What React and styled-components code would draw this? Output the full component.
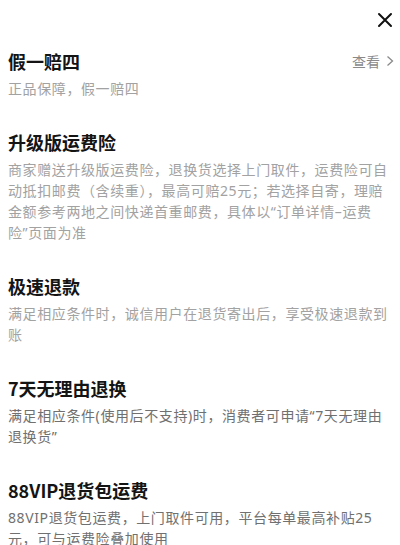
import React from 'react';
import styled, { createGlobalStyle } from 'styled-components';

const GlobalStyle = createGlobalStyle`
    html, body {
        margin: 0;
        padding: 0;
        background: #ffffff;
    }
    body {
        font-family: "Noto Sans CJK SC", "Noto Sans", sans-serif;
    }
`;

const Sheet = styled.div`
    width: 400px;
    height: 545px;
    overflow: hidden;
    background: #ffffff;
`;

const Header = styled.div`
    display: flex;
    justify-content: flex-end;
    align-items: center;
    height: 40px;
    padding: 0 6px;
`;

const CloseButton = styled.button`
    display: flex;
    align-items: center;
    justify-content: center;
    width: 18px;
    height: 18px;
    padding: 0;
    border: none;
    background: none;
    color: #111111;
`;

const List = styled.div`
    display: flex;
    flex-direction: column;
    gap: 31px;
    padding: 9px 8px 0 8px;
`;

const Section = styled.section`
    display: flex;
    flex-direction: column;
    gap: 5px;
`;

const TitleRow = styled.div`
    display: flex;
    justify-content: space-between;
    align-items: center;
`;

const Title = styled.h3`
    margin: 0;
    font-size: 18px;
    line-height: 24px;
    font-weight: 700;
    color: #141414;
`;

const ViewLink = styled.a`
    display: flex;
    align-items: center;
    gap: 6px;
    font-size: 14px;
    line-height: 24px;
    color: #8a8a8a;
    margin-right: -2px;
`;

const Desc = styled.p`
    margin: 0;
    font-family: "Noto Sans", "Noto Sans CJK SC", sans-serif;
    font-size: 14px;
    letter-spacing: 0.6px;
    line-height: 21px;
    color: ${(p) => (p.$dark ? '#707070' : '#a2a2a2')};
`;

const items = [
    {
        title: '假一赔四',
        desc: '正品保障，假一赔四',
        link: true,
    },
    {
        title: '升级版运费险',
        desc: '商家赠送升级版运费险，退换货选择上门取件，运费险可自动抵扣邮费（含续重），最高可赔25元；若选择自寄，理赔金额参考两地之间快递首重邮费，具体以“订单详情–运费险”页面为准',
    },
    {
        title: '极速退款',
        desc: '满足相应条件时，诚信用户在退货寄出后，享受极速退款到账',
    },
    {
        title: '7天无理由退换',
        desc: '满足相应条件(使用后不支持)时，消费者可申请“7天无理由退换货”',
        dark: true,
    },
    {
        title: '88VIP退货包运费',
        desc: '88VIP退货包运费，上门取件可用，平台每单最高补贴25元，可与运费险叠加使用',
        dark: true,
    },
];

const App = () => {
    return (
        <Sheet>
            <GlobalStyle />
            <Header>
                <CloseButton aria-label="关闭">
                    <svg width="16" height="16" viewBox="0 0 16 16">
                        <path d="M2 2 L14 14 M14 2 L2 14" stroke="currentColor" strokeWidth="2" strokeLinecap="round" />
                    </svg>
                </CloseButton>
            </Header>
            <List>
                {items.map((item) => (
                    <Section key={item.title}>
                        <TitleRow>
                            <Title>{item.title}</Title>
                            {item.link && (
                                <ViewLink>
                                    查看
                                    <svg width="8" height="12" viewBox="0 0 8 12">
                                        <path d="M1.5 1.5 L6.5 6 L1.5 10.5" fill="none" stroke="currentColor" strokeWidth="1.3" />
                                    </svg>
                                </ViewLink>
                            )}
                        </TitleRow>
                        <Desc $dark={item.dark}>{item.desc}</Desc>
                    </Section>
                ))}
            </List>
        </Sheet>
    );
};

export default App;
